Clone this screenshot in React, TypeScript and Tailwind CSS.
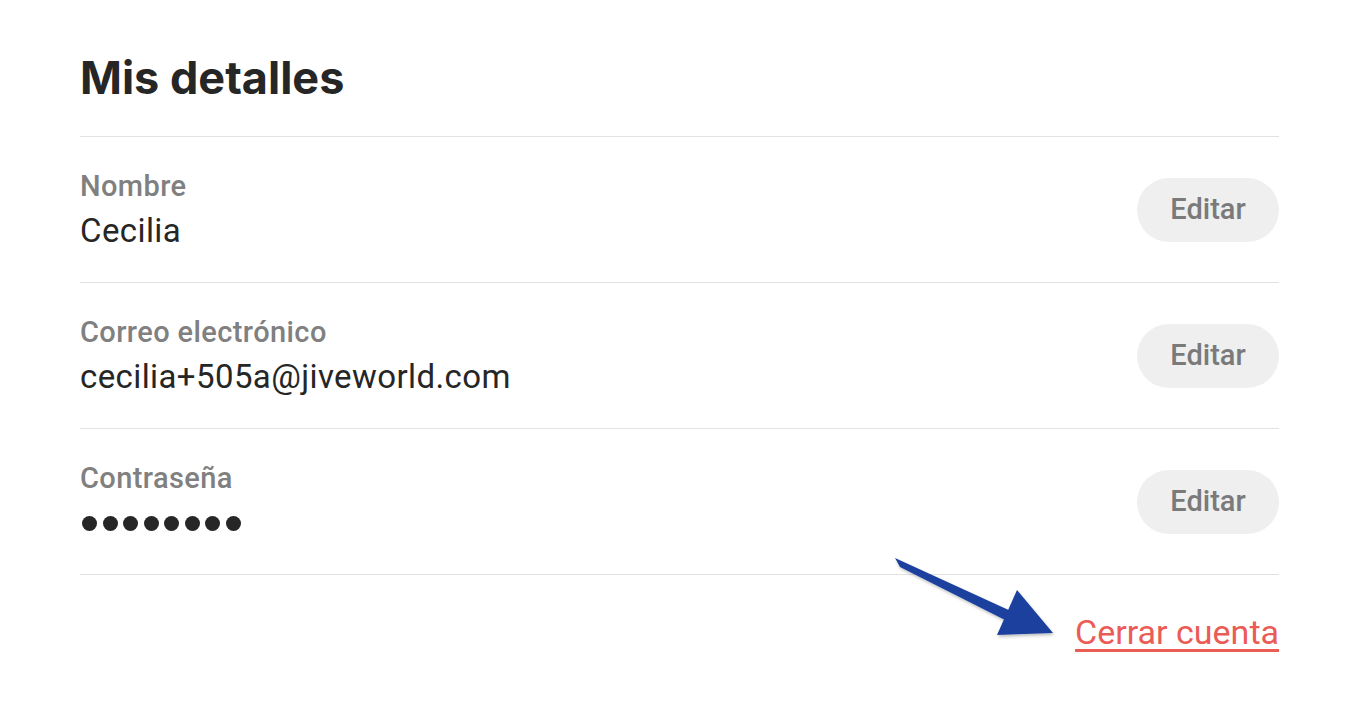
import React from 'react';

const rows = [
  { label: 'Nombre', value: 'Cecilia' },
  { label: 'Correo electrónico', value: 'cecilia+505a@jiveworld.com' },
  { label: 'Contraseña', value: null },
];

const Arrow = () => (
  <svg
    className="absolute left-[880px] top-[545px] pointer-events-none"
    width="190"
    height="105"
    viewBox="880 545 190 105"
  >
    <defs>
      <filter id="sh" x="-20%" y="-20%" width="140%" height="140%">
        <feDropShadow dx="1" dy="2" stdDeviation="1.5" floodColor="#000" floodOpacity="0.25" />
      </filter>
    </defs>
    <g filter="url(#sh)" fill="#1b3f9e">
      <path d="M895 558 L1013 612 L1009 622 L900 567 Z" />
      <path d="M1017 590 L1053 633 L997 635 Z" />
    </g>
  </svg>
);

export default function App() {
  return (
    <div className="relative w-[1346px] h-[714px] bg-white" style={{ fontFamily: 'Roboto, "Liberation Sans", sans-serif' }}>
      <div className="pl-[80px] pr-[67px] pt-[48px]">
        <h1
          className="text-[45px] leading-[60px] font-bold text-[#262626] pb-[28px] border-b border-[#e2e2e2]"
          style={{ fontFamily: 'Inter, "Liberation Sans", sans-serif' }}
        >
          Mis detalles
        </h1>
        {rows.map((r) => (
          <div key={r.label} className="h-[146px] flex items-center justify-between border-b border-[#e2e2e2]">
            <div className="flex flex-col gap-[7px]">
              <div className="text-[29px] leading-[36px] text-[#808080] font-medium tracking-[0.4px]">{r.label}</div>
              {r.value ? (
                <div className="text-[33px] leading-[40px] text-[#262626] tracking-[0.4px]">{r.value}</div>
              ) : (
                <div className="h-[40px] flex items-center gap-[5.5px] pl-[2px]">
                  {Array.from({ length: 8 }).map((_, i) => (
                    <span key={i} className="w-[15px] h-[15px] rounded-full bg-[#262626]" />
                  ))}
                </div>
              )}
            </div>
            <button className="w-[142px] h-[64px] rounded-full bg-[#efefef] text-[29px] font-medium text-[#7a7a7a]">
              Editar
            </button>
          </div>
        ))}
        <div className="flex justify-end pt-[37px]">
          <a className="text-[34px] leading-[40px] text-[#ea5c55] underline underline-offset-[5px] decoration-[2.5px] cursor-pointer">
            Cerrar cuenta
          </a>
        </div>
      </div>
      <Arrow />
    </div>
  );
}
